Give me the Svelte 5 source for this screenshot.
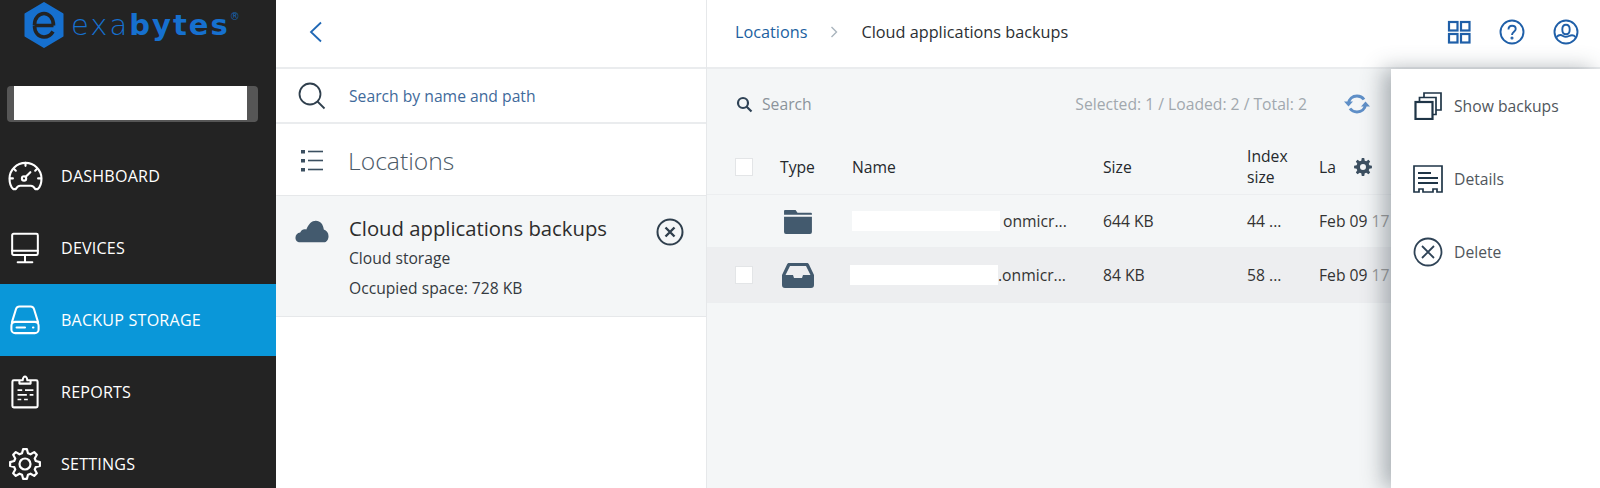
<script>
  const nav = [
    { id: 'dash', label: 'DASHBOARD' },
    { id: 'dev', label: 'DEVICES' },
    { id: 'store', label: 'BACKUP STORAGE', active: true },
    { id: 'rep', label: 'REPORTS' },
    { id: 'set', label: 'SETTINGS' }
  ];
  const rows = [
    { icon: 'folder', check: false, redactClass: 'r1', suffix: 'onmicr...', size: '644 KB', index: '44 ...', selected: false },
    { icon: 'tray', check: true, redactClass: 'r2', suffix: '.onmicr...', size: '84 KB', index: '58 ...', selected: true }
  ];

  function gear(c, teeth, outer, inner, tip = 0.3, base = 0.55) {
    const step = (Math.PI * 2) / teeth;
    const pts = [];
    for (let i = 0; i < teeth; i++) {
      const a = i * step - Math.PI / 2;
      const p = (ang, r) => [(c + Math.cos(ang) * r).toFixed(2), (c + Math.sin(ang) * r).toFixed(2)].join(' ');
      pts.push(p(a - step * base / 2 * 1.1, inner), p(a - step * tip / 2, outer), p(a + step * tip / 2, outer), p(a + step * base / 2 * 1.1, inner));
    }
    return 'M' + pts.join('L') + 'Z';
  }
  const bigGear = gear(16, 8, 15, 11.2, 0.32, 0.62);
  const smallGear = gear(9, 8, 9, 6.6, 0.34, 0.62);
</script>

<div class="app">
  <aside class="sidebar">
    <div class="logo">
      <svg class="hex" width="40" height="46" viewBox="0 0 40 46">
        <path d="M20 1 38.5 12v22L20 45 1.5 34V12z" fill="#1670cf" stroke="#1670cf" stroke-linejoin="round" stroke-width="2"/>
        <path d="M29.5 23.500H10.500M10.500 23C10.500 16 15 11.500 20 11.500s9.500 4.500 9.500 12M29 29.500C27 33 24 35 20 35c-5.500 0-9.500-4.500-9.500-11.500" fill="none" stroke="#232323" stroke-width="3.600"/>
      </svg>
      <span class="wordmark"><span class="exa">exa</span><b>bytes</b><sup>®</sup></span>
    </div>
    <div class="tenant"><div class="tenant-in"></div></div>
    <nav>
      {#each nav as item}
        <div class="nav-item" class:active={item.active}>
          <span class="nav-ic">
            {#if item.id === 'dash'}
              <svg width="35" height="31" viewBox="0 0 36 32" fill="none" stroke="#fff" stroke-width="2.200" stroke-linejoin="round" stroke-linecap="round">
                <path d="M8 29H5.500C3 27 1.500 23 1.500 18 1.500 9 9 2 18 2s16.500 7 16.500 16c0 5-1.500 9-4 11H28c-1-2-2.500-3.500-4.500-3.500h-11C10.500 25.500 9 27 8 29z"/>
                <path d="M18 2v3M6 8l2 2M30 8l-2 2M2 18h3M34 18h-3"/>
                <circle cx="16.500" cy="18" r="2.200"/><path d="M18 16.500 23 11.500"/>
              </svg>
            {:else if item.id === 'dev'}
              <svg width="30" height="33" viewBox="0 0 32 36" fill="none" stroke="#fff" stroke-width="2.200" stroke-linejoin="round" stroke-linecap="round">
                <rect x="2" y="2" width="28" height="23" rx="1.500"/><path d="M2 20.500h28M16 25v7M8 33h16"/>
              </svg>
            {:else if item.id === 'store'}
              <svg width="30" height="30" viewBox="0 0 32 32" fill="none" stroke="#fff" stroke-width="2.200" stroke-linejoin="round" stroke-linecap="round">
                <path d="M2 18.500 6.500 4C7 2.500 8 1.500 10 1.500h12c2 0 3 1 3.500 2.500L30 18.500"/>
                <rect x="1.500" y="18" width="29" height="12" rx="4"/><path d="M7 24h9M24.500 24h.5"/>
              </svg>
            {:else if item.id === 'rep'}
              <svg width="28" height="34" viewBox="0 0 30 36" fill="none" stroke="#fff" stroke-width="2.200" stroke-linejoin="round">
                <path d="M9 5.500H3a1.500 1.500 0 0 0-1.500 1.500v26A1.500 1.500 0 0 0 3 34.500h24a1.500 1.500 0 0 0 1.500-1.500V7A1.500 1.500 0 0 0 27 5.500h-6M9 9V5.500h3.500C13 2 13.500 1.500 15 1.500s2 .5 2.500 4H21V9z"/>
                <path d="M7 16h5M15 16h9M7 21h10M20 21h4M7 26h4M14 26h4" stroke-width="1.800"/>
              </svg>
            {:else}
              <svg width="32" height="32" viewBox="0 0 32 32" fill="none" stroke="#fff" stroke-width="2.200" stroke-linejoin="round">
                <path d={bigGear}/>
                <circle cx="16" cy="16" r="5.500"/>
              </svg>
            {/if}
          </span>
          <span>{item.label}</span>
        </div>
      {/each}
    </nav>
  </aside>

  <section class="locations">
    <div class="back-row">
      <svg width="14" height="22" viewBox="0 0 14 22" fill="none" stroke="#2068b5" stroke-width="1.800"><path d="M12 1.500 2 11l10 9.500"/></svg>
    </div>
    <div class="loc-search">
      <svg width="28" height="28" viewBox="0 0 28 28" fill="none" stroke="#2f3f4d" stroke-width="1.800"><circle cx="12" cy="12" r="10.500"/><path d="M19.500 19.500l7 7"/></svg>
      <span>Search by name and path</span>
    </div>
    <div class="loc-title">
      <svg width="24" height="24" viewBox="0 0 24 24" fill="#3b4f60"><rect x="1" y="1" width="4" height="3.500"/><rect x="1" y="10" width="4" height="3.500"/><rect x="1" y="19" width="4" height="3.500"/><rect x="8" y="1.700" width="15" height="1.600"/><rect x="8" y="10.700" width="15" height="1.600"/><rect x="8" y="19.700" width="15" height="1.600"/></svg>
      <span>Locations</span>
    </div>
    <div class="loc-item">
      <svg class="cloud" width="34" height="23" viewBox="0 0 36 24"><path d="M5.500 23.500C2 23.500.5 21 .5 18.500c0-3 2-5 5-5.500C7 10 9.500 9 12 10 14 4 18 .5 22 .5c5 0 8 4 8.500 9.500 3 1 5 3.500 5 7 0 3.500-2 6.500-5 6.500z" fill="#435a6e"/></svg>
      <div class="loc-text">
        <div class="loc-name">Cloud applications backups</div>
        <div class="loc-sub">Cloud storage</div>
        <div class="loc-sub">Occupied space: 728 KB</div>
      </div>
      <svg class="loc-x" width="28" height="28" viewBox="0 0 28 28" fill="none" stroke="#2f3f4d" stroke-width="2"><circle cx="14" cy="14" r="12.500"/><path d="M9.500 9.500l9 9M18.500 9.500l-9 9" stroke-width="2.400"/></svg>
    </div>
  </section>

  <main class="main">
    <header class="top">
      <div class="crumbs">
        <span class="crumb-link">Locations</span>
        <svg width="8" height="12" viewBox="0 0 8 12" fill="none" stroke="#a9b4bd" stroke-width="1.400"><path d="M1.500 1l5 5-5 5"/></svg>
        <span class="crumb-now">Cloud applications backups</span>
      </div>
      <div class="top-icons">
        <svg width="24" height="24" viewBox="0 0 24 24" fill="none" stroke="#1f5fa8" stroke-width="2.200"><rect x="2" y="2" width="8.500" height="8.500"/><rect x="14" y="2" width="8.500" height="8.500"/><rect x="2" y="14" width="8.500" height="8.500"/><rect x="14" y="14" width="8.500" height="8.500"/></svg>
        <svg width="26" height="26" viewBox="0 0 26 26" fill="none" stroke="#1f5fa8" stroke-width="1.900"><circle cx="13" cy="13" r="11.500"/><path d="M9.500 10.500c0-2.500 1.700-3.800 3.600-3.800s3.600 1.200 3.600 3.200c0 2.800-3.700 2.800-3.700 6"/><circle cx="13" cy="19" r=".6"/></svg>
        <svg width="26" height="26" viewBox="0 0 26 26" fill="none" stroke="#1f5fa8" stroke-width="1.900"><circle cx="13" cy="13" r="11.500"/><path d="M9.300 10.500c0-3 1.600-4.700 3.700-4.700s3.700 1.700 3.700 4.700c0 2.500-1.300 4.800-3.700 4.800s-3.700-2.300-3.700-4.800zM3.500 18c2.500-2.500 5-2 6.500-1s4 1 6 0 4.500-1.500 6.500 1"/></svg>
      </div>
    </header>
    <div class="body">
      <div class="toolbar">
        <svg width="17" height="17" viewBox="0 0 17 17" fill="none" stroke="#2f4356" stroke-width="2.200"><circle cx="7" cy="7" r="5"/><path d="M10.500 10.500l5 5"/></svg>
        <span class="tb-search">Search</span>
        <span class="counts">Selected: 1 / Loaded: 2 / Total: 2</span>
        <svg class="refresh" width="26" height="20" viewBox="0 0 26 20" fill="none" stroke="#5f8fc7" stroke-width="3"><path d="M4.500 9.500C5 5 8.500 2 13 2c3 0 5.500 1.400 7 3.500"/><path d="M21.500 10.500C21 15 17.500 18 13 18c-3 0-5.500-1.400-7-3.500"/><path d="M0 7.500l4.500 5 4.500-5zM26 12.500l-4.500-5-4.500 5z" fill="#5f8fc7" stroke="none"/></svg>
      </div>
      <div class="row head">
        <span class="c-check"><span class="box"></span></span>
        <span class="c-type">Type</span>
        <span class="c-name">Name</span>
        <span class="c-size">Size</span>
        <span class="c-index">Index<br/>size</span>
        <span class="c-last">La
          <svg width="18" height="18" viewBox="0 0 18 18"><path fill="#3c4f60" fill-rule="evenodd" d={smallGear + 'M12 9a3 3 0 1 0-6 0 3 3 0 0 0 6 0z'}/></svg>
        </span>
      </div>
      {#each rows as r}
        <div class="row item" class:selected={r.selected}>
          <span class="c-check">{#if r.check}<span class="box"></span>{/if}</span>
          <span class="c-type">
            {#if r.icon === 'folder'}
              <svg class="ic-folder" width="29" height="25" viewBox="0 0 30 26" fill="#435a6e"><path d="M1 2a1 1 0 0 1 1-1h11l2 3h14a1 1 0 0 1 1 1v1H1zM1 8h29v16a2 2 0 0 1-2 2H3a2 2 0 0 1-2-2z"/></svg>
            {:else}
              <svg class="ic-tray" width="32" height="26" viewBox="0 0 32 26"><path fill="#435a6e" fill-rule="evenodd" d="M7 1h18c1 0 1.500.5 2 1.500L32 13v10a3 3 0 0 1-3 3H3a3 3 0 0 1-3-3V13L5 2.500C5.500 1.500 6 1 7 1zM8 4 3.500 13H11l1 3h8l1-3h7.500L24 4z"/></svg>
            {/if}
          </span>
          <span class="c-name"><span class="redact {r.redactClass}"></span>{r.suffix}</span>
          <span class="c-size">{r.size}</span>
          <span class="c-index">{r.index}</span>
          <span class="c-last">Feb 09 <em>17</em></span>
        </div>
      {/each}
    </div>
    <aside class="panel">
      <div class="act">
        <svg width="28" height="28" viewBox="0 0 28 28" fill="none" stroke="#1f3547" stroke-width="1.700"><path d="M10 6V1h17v17h-5"/><path d="M5.500 10V5.500H22v17h-4"/><rect x="1.500" y="10" width="17" height="17" fill="#fff" stroke-width="2.200"/></svg>
        <span>Show backups</span>
      </div>
      <div class="act">
        <svg width="30" height="28" viewBox="0 0 30 28" fill="none" stroke="#1f3547" stroke-width="1.700"><path d="M1 1h28v26h-5v-3h-4v3H10v-3H6v3H1z"/><path d="M5 8h13M5 13h20M5 18h20" stroke-width="2"/></svg>
        <span>Details</span>
      </div>
      <div class="act">
        <svg width="30" height="30" viewBox="0 0 30 30" fill="none" stroke="#2f4356" stroke-width="1.800"><circle cx="15" cy="15" r="13.500"/><path d="M9 9l12 12M21 9 9 21"/></svg>
        <span>Delete</span>
      </div>
    </aside>
  </main>
</div>

<style>
  :global(body) { margin: 0; background: #fff; }
  .app {
    display: grid;
    grid-template-columns: 276px 431px 1fr;
    height: 488px;
    width: 1600px;
    overflow: hidden;
    font-family: "Open Sans", sans-serif;
    color: #2d2d2d;
  }
  .sidebar { background: #232323; color: #fff; display: flex; flex-direction: column; overflow: hidden; }
  .logo { height: 86px; flex: none; box-sizing: border-box; padding: 2px 0 0 24px; display: flex; align-items: flex-start; gap: 7px; }
  .wordmark { font-family: "DejaVu Sans", sans-serif; font-size: 29px; line-height: 46px; color: #1670cf; letter-spacing: 2px; white-space: nowrap; }
  .exa { font-weight: 200; }
  .wordmark b { font-weight: 700; }
  .wordmark sup { font-size: 10px; line-height: 0; vertical-align: 15px; font-weight: 400; letter-spacing: 0; color: #1763b0; }
  .tenant { flex: none; margin: 0 18px 0 7px; height: 36px; background: #565656; border-radius: 4px; padding: 0 11px 0 7px; }
  .tenant-in { background: #fff; height: 34px; }
  nav { margin-top: 18px; flex: none; }
  .nav-item { height: 72px; display: flex; align-items: center; font-size: 16.100px; font-weight: 500; letter-spacing: .2px; color: #fff; }
  .nav-item.active { background: #0a97d9; }
  .nav-ic { width: 61px; box-sizing: border-box; display: flex; justify-content: center; padding-right: 11px; flex: none; }

  .locations { border-right: 1px solid #e6e8ea; display: flex; flex-direction: column; background: #fff; }
  .back-row { height: 64px; padding-bottom: 3px; display: flex; align-items: center; padding-left: 33px; border-bottom: 2px solid #eaecee; flex: none; }
  .loc-search { height: 53px; border-bottom: 2px solid #eaecee; display: flex; align-items: center; padding-left: 22px; gap: 23px; font-size: 15.700px; color: #3f6a9b; flex: none; }
  .loc-title { height: 69px; padding-top: 2px; border-bottom: 1px solid #e6e8ea; display: flex; align-items: center; padding-left: 24px; gap: 24px; font-size: 24.700px; font-weight: 300; color: #4b5a67; flex: none; }
  .loc-item { height: 121px; background: #f4f6f7; border-bottom: 1px solid #e6e8ea; display: flex; align-items: flex-start; padding: 22px 22px 0 19px; box-sizing: border-box; flex: none; }
  .cloud { margin-top: 2px; flex: none; }
  .loc-text { flex: 1; margin-left: 20px; margin-top: -2px; }
  .loc-name { font-size: 20.300px; line-height: 28px; color: #2d2d2d; margin-top: -2px; }
  .loc-sub { font-size: 15.650px; line-height: 29px; color: #343a40; }
  .loc-sub:nth-child(2) { margin-top: 2px; }
  .loc-sub:nth-child(3) { padding-top: 1px; }
  .loc-x { flex: none; }

  .main { position: relative; display: flex; flex-direction: column; min-width: 0; }
  .top { height: 64px; padding: 0 21px 3px 28px; border-bottom: 2px solid #eaecee; display: flex; align-items: center; justify-content: space-between; background: #fff; flex: none; }
  .crumbs { display: flex; align-items: center; font-size: 16.250px; font-weight: 500; }
  .crumb-link { color: #215f9f; }
  .crumbs svg { margin: 0 23px; }
  .crumb-now { color: #2b2f33; }
  .top-icons { display: flex; align-items: center; gap: 28px; }
  .body { flex: 1; background: #f4f6f7; }
  .toolbar { height: 68px; padding-top: 1px; display: flex; align-items: center; padding-left: 29px; padding-right: 230px; font-size: 15.700px; }
  .tb-search { margin-left: 9px; flex: 1; color: #8b939b; }
  .counts { color: #a1a8ae; }
  .refresh { margin-left: 37px; }
  .row { display: grid; grid-template-columns: 45px 72px 251px 144px 72px 1fr; align-items: center; padding-left: 28px; font-size: 15.700px; color: #333; }
  .head { height: 54px; padding-top: 2px; border-bottom: 1px solid #eceef0; color: #25292d; font-weight: 500; line-height: 21px; }
  .item { height: 52px; border-bottom: 1px solid #eceef0; }
  .item.selected { background: #edeef0; height: 54px; }
  .box { display: block; width: 16px; height: 16px; background: #fff; border: 1px solid #e3e5e7; }
  .c-type svg { display: block; }
  .ic-folder { margin-left: 3px; }
  .ic-tray { margin-left: 2px; }
  .c-name { white-space: nowrap; display: flex; align-items: center; }
  .redact { display: inline-block; height: 20px; background: #fff; }
  .r1 { width: 148px; margin-right: 3px; }
  .r2 { width: 148px; margin-left: -2px; }
  .c-last { white-space: nowrap; display: flex; align-items: center; gap: 4px; }
  .head .c-last { gap: 18px; }
  .c-last em { font-style: normal; color: #999; }
  .panel { position: absolute; top: 69px; right: 0; bottom: 0; width: 209px; background: #fff; box-shadow: -8px 0 20px rgba(80,90,100,.45); }
  .act { height: 73px; display: flex; align-items: center; font-size: 15.700px; color: #50565c; padding-left: 22px; }
  .act svg { width: 30px; flex: none; margin-right: 11px; }
</style>
